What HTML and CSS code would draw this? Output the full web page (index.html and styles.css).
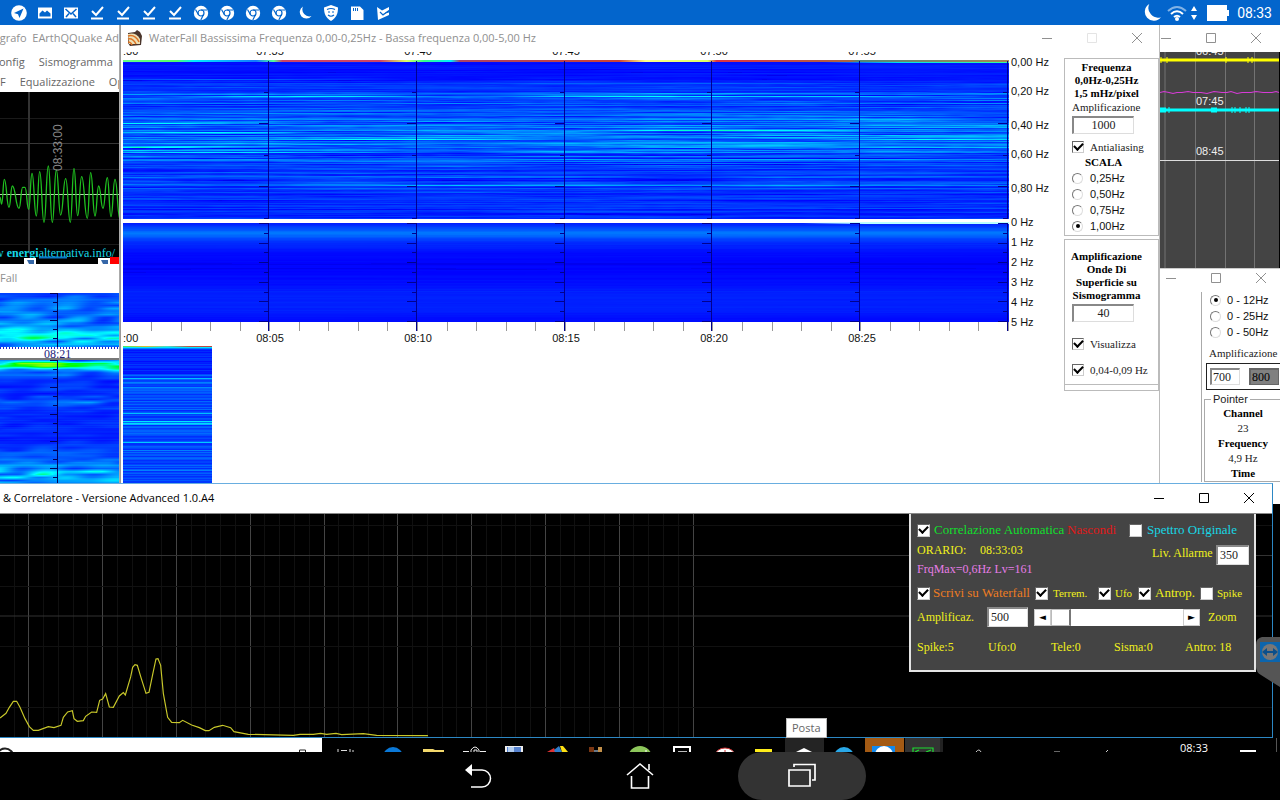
FILE: index.html
```html
<!DOCTYPE html>
<html lang="it">
<head>
<meta charset="utf-8">
<title>EArthQQuake</title>
<link rel="stylesheet" href="styles.css">
</head>
<body>
<svg class="defs" width="0" height="0" aria-hidden="true">
  <symbol id="check" viewBox="0 0 16 16"><path d="M3 6l4 4 7-8" fill="none" stroke="#fff" stroke-width="2"/><path d="M2 13.500h12" stroke="#fff" stroke-width="2"/></symbol>
  <symbol id="chrome" viewBox="0 0 16 16"><circle cx="8" cy="8" r="7.200" fill="#fff"/><circle cx="8" cy="8" r="3" fill="none" stroke="#0365cc" stroke-width="1.200"/><path d="M8 5h6M5.400 9.500L2.500 4.500M10.600 9.500L7.800 15" stroke="#0365cc" stroke-width="1.200"/></symbol>
  <symbol id="moon" viewBox="0 0 16 16"><path d="M6 1.500a6.500 6.500 0 1 0 8.500 9.500A7 7 0 0 1 6 1.500z" fill="#fff"/></symbol>
  <symbol id="min" viewBox="0 0 12 12"><path d="M1 6.500h10" stroke="currentColor"/></symbol>
  <symbol id="max" viewBox="0 0 12 12"><path d="M1.500 1.500h9v9h-9z" fill="none" stroke="currentColor"/></symbol>
  <symbol id="close" viewBox="0 0 12 12"><path d="M1 1l10 10M11 1L1 11" stroke="currentColor"/></symbol>
</svg>

<header class="status">
  <div class="status-icons">
    <svg viewBox="0 0 16 16"><circle cx="8" cy="8" r="7.800" fill="#fff"/><path d="M12.500 3.500L3 8l4 1.200L8.500 13z" fill="#0365cc"/></svg>
    <svg viewBox="0 0 16 16"><path d="M1 2.500h14v11H1z" fill="#fff"/><path d="M2.500 11.500V8.500l3-3 2.500 2 2-2 3.500 3v3z" fill="#0365cc"/></svg>
    <svg viewBox="0 0 16 16"><path d="M1 2.500h14v11H1z" fill="#fff"/><path d="M2.500 4l5.500 5 5.500-5M3 12l3-3.500M13 12l-3-3.500" fill="none" stroke="#0365cc" stroke-width="1.500"/></svg>
    <svg><use href="#check"/></svg><svg><use href="#check"/></svg><svg><use href="#check"/></svg><svg><use href="#check"/></svg>
    <svg><use href="#chrome"/></svg><svg><use href="#chrome"/></svg><svg><use href="#chrome"/></svg><svg><use href="#chrome"/></svg>
    <svg><use href="#moon"/></svg>
    <svg viewBox="0 0 16 16"><path d="M8 0l7 2.500c0 6-1.500 10-7 13.500C2.500 12.500 1 8.500 1 2.500z" fill="#fff"/><path d="M4 4.500q4-2 8 0M5 7h2M9 7h2M5 10q3 2.500 6 0" fill="none" stroke="#0365cc" stroke-width="1.200"/></svg>
    <svg viewBox="0 0 16 16"><path d="M2 1.500h9l3.500 3.500v10H2z" fill="#fff"/><path d="M4.500 3v3M6.500 3v3M8.500 3v3" stroke="#0365cc"/></svg>
    <svg viewBox="0 0 16 16"><path d="M2 2l5 3.500 7-3.500v3.500L8 9l6-1.500V10L3 15z" fill="#fff"/><path d="M5 7l3 3 6-4.500" fill="none" stroke="#0365cc" stroke-width="1.200"/></svg>
  </div>
  <div class="status-right">
    <svg class="big-moon"><use href="#moon"/></svg>
    <svg class="wifi" viewBox="0 0 20 16"><g fill="none" stroke="#fff" stroke-width="2"><path d="M1 6q9-8 18 0" opacity=".5"/><path d="M4 9q6-5.500 12 0M7 12q3-2.500 6 0"/></g><circle cx="10" cy="14" r="2" fill="#fff"/></svg>
    <svg class="updown" viewBox="0 0 6 14"><path d="M3 0l3 5H0zM3 14l3-5H0z" fill="#fff"/></svg>
    <svg class="battery" viewBox="0 0 22 16"><path d="M0 0h20v5h2v6h-2v5H0z" fill="#fff"/></svg>
    <time>08:33</time>
  </div>
</header>

<main class="desktop">
  <div class="workspace">
    <section class="window seismo">
      <div class="titlebar faded"><span>grafo&nbsp; EArthQQuake Ad</span></div>
      <nav class="menu menu-top"><a href="#">onfig</a><a href="#">Sismogramma</a></nav>
      <nav class="menu menu-sub"><a href="#">F</a><a href="#">Equalizzazione</a><a href="#">Op</a></nav>
      <svg class="trace" viewBox="0 0 120 172" preserveAspectRatio="xMinYMin slice">
        <rect width="120" height="172" fill="#000"/>
        <path d="M0 26.500h120M0 77.500h120M0 127.500h120M0 152.500h120" stroke="#1a1a1a"/>
        <path d="M0 51.500h120" stroke="#383838"/><path d="M29 0v160" stroke="#333" stroke-width="2"/>
        <path d="M0 102.500h120" stroke="#b8d8b0"/>
        <g transform="translate(0 -12) scale(.3333)"><path id="wave" fill="none" stroke="#1fc01f" stroke-width="4"/></g>
        <text class="trace-time" transform="translate(62 79) rotate(-90)">08:33:00</text>
        <text class="trace-link" x="-5" y="165">w <tspan font-weight="bold">energi</tspan>alternativa.info/</text>
        <path d="M39 165.500h28" stroke="#0878c8" stroke-width="2"/>
        <path d="M24 166h12v6H24zM98 166h12v6H98z" fill="#fff"/><path d="M27 168h7v4h-5zM101 168h7v4h-5z" fill="#3567a8"/><path d="M110 165h10v7h-10z" fill="red"/>
      </svg>
    </section>

    <section class="window fall">
      <div class="titlebar faded"><span>Fall</span></div>
      <canvas id="fall-a" width="120" height="54"></canvas>
      <div class="fall-axis"><span>08:21</span></div>
      <canvas id="fall-b" width="120" height="123"></canvas>
    </section>

    <section class="window waterfall">
      <div class="titlebar faded">
        <svg class="app-icon" viewBox="0 0 16 16"><path d="M1 3l7-1 2-2 3 2 2 4-1 9-11 1-2-3z" fill="#4a352b"/><path d="M1 4q8-2 12 5v5H2z" fill="#eee0b5"/><path d="M1 6q7-2 11 6M1 9q5-1 8 5M1 12q3 0 4 3" fill="none" stroke="#dd7425" stroke-width="1.500"/></svg>
        <span>WaterFall Bassissima Frequenza 0,00-0,25Hz - Bassa frequenza 0,00-5,00 Hz</span>
        <div class="controls"><button aria-label="Riduci"><svg><use href="#min"/></svg></button><button class="off" aria-label="Ingrandisci"><svg><use href="#max"/></svg></button><button aria-label="Chiudi"><svg><use href="#close"/></svg></button></div>
      </div>
      <div class="waterfall-body">
        <div class="charts">
          <div class="times times-cut"><span>:30</span><span>07:35</span><span>07:40</span><span>07:45</span><span>07:50</span><span>07:55</span></div>
          <canvas id="main-fall" width="886" height="271"></canvas>
          <div class="times"><span>:00</span><span>08:05</span><span>08:10</span><span>08:15</span><span>08:20</span><span>08:25</span></div>
          <canvas id="next-fall" width="89" height="137"></canvas>
        </div>
        <ul class="scale">
          <li>0,00 Hz</li><li>0,20 Hz</li><li>0,40 Hz</li><li>0,60 Hz</li><li>0,80 Hz</li>
          <li>0 Hz</li><li>1 Hz</li><li>2 Hz</li><li>3 Hz</li><li>4 Hz</li><li>5 Hz</li>
        </ul>
        <aside class="side">
          <div class="box box-freq">
            <p class="head">Frequenza<br>0,0Hz-0,25Hz<br>1,5 mHz/pixel</p>
            <label class="cap" for="amp1">Amplificazione</label>
            <input class="field" id="amp1" value="1000">
            <label class="opt"><input type="checkbox" checked>Antialiasing</label>
            <p class="scala">SCALA</p>
            <div class="radios">
              <label><input type="radio" name="scala">0,25Hz</label>
              <label><input type="radio" name="scala">0,50Hz</label>
              <label><input type="radio" name="scala">0,75Hz</label>
              <label><input type="radio" name="scala" checked>1,00Hz</label>
            </div>
          </div>
          <div class="box box-amp">
            <label class="head" for="amp2">Amplificazione<br>Onde Di<br>Superficie su<br>Sismogramma</label>
            <input class="field" id="amp2" value="40">
            <label class="opt"><input type="checkbox" checked>Visualizza</label>
            <label class="opt"><input type="checkbox" checked>0,04-0,09 Hz</label>
          </div>
          <div class="box box-end"></div>
        </aside>
      </div>
    </section>

    <section class="window drum">
      <div class="titlebar faded"><div class="controls"><button aria-label="Riduci"><svg><use href="#min"/></svg></button><button aria-label="Ingrandisci"><svg><use href="#max"/></svg></button><button aria-label="Chiudi"><svg><use href="#close"/></svg></button></div></div>
      <svg class="drum-plot" viewBox="0 0 120 216" preserveAspectRatio="xMinYMin slice">
        <rect width="119" height="216" fill="#444"/><path d="M119.500 0v216" stroke="#000"/>
        <path d="M5 0v216M35.500 0v216M65.500 0v216M94.500 0v216" stroke="#737373"/>
        <g class="drum-label"><text x="36" y="3">06:45</text><text x="36" y="53">07:45</text><text x="36" y="103">08:45</text></g>
        <path d="M0 8h119" stroke="#ff0" stroke-width="3"/><path d="M1 5v6M7 5v6M66 5v6M88 5v6M92 5v6" stroke="#ff0"/>
        <path d="M0 40.500l4-1 5 1 4 1 4-1 5 0 6-1 5 1 8 0 6 1 7-2 8 1 5 0 4-1 6 2 5-1 9 0 5-1 7 1 9 0 4-1 3 1" fill="none" stroke="#d63bd6" stroke-width="1.200"/>
        <path d="M0 58h119" stroke="#0ff" stroke-width="3"/><path d="M0 58h6M51 58h6" stroke="#0ff" stroke-width="5"/><path d="M9 55v6M72 55v6M75 55v6M80 55v6M86 55v6M89 55v6" stroke="#0ff"/>
        <path d="M0 108.500h119" stroke="#ddd"/>
      </svg>
    </section>

    <section class="window pointer">
      <div class="titlebar faded"><div class="controls"><button aria-label="Riduci"><svg><use href="#min"/></svg></button><button aria-label="Ingrandisci"><svg><use href="#max"/></svg></button><button aria-label="Chiudi"><svg><use href="#close"/></svg></button></div></div>
      <div class="pointer-body">
        <div class="radios">
          <label><input type="radio" name="banda" checked>0 - 12Hz</label>
          <label><input type="radio" name="banda">0 - 25Hz</label>
          <label><input type="radio" name="banda">0 - 50Hz</label>
        </div>
        <label class="cap" for="lo">Amplificazione</label>
        <div class="pair"><input class="field" id="lo" value="700"><input class="field gray" aria-label="Massimo" value="800"></div>
        <fieldset><legend>Pointer</legend>
          <dl><dt>Channel</dt><dd>23</dd><dt>Frequency</dt><dd>4,9 Hz</dd><dt>Time</dt></dl>
        </fieldset>
      </div>
    </section>

    <section class="window correlator">
      <div class="titlebar"><span>&amp; Correlatore - Versione Advanced 1.0.A4</span>
        <div class="controls"><button aria-label="Riduci"><svg><use href="#min"/></svg></button><button aria-label="Ingrandisci"><svg><use href="#max"/></svg></button><button aria-label="Chiudi"><svg><use href="#close"/></svg></button></div>
      </div>
      <div class="spectrum">
        <svg viewBox="0 514 1272 223" preserveAspectRatio="xMinYMin slice">
          <g id="grid"></g>
          <path d="M0 525.500h1272M0 586.500h1272M0 646.500h1272M0 707.500h1272" stroke="#111"/>
          <path d="M0 555.500h1272M0 616h1272" stroke="#333"/>
          <g transform="translate(0 480) scale(.3333)"><path d="M0 714L18 700 28 682 40 664 50 664 60 682 75 716 88 740 100 751 115 751 145 740 162 743 183 736 190 712 203 696 217 692 222 716 232 724 250 722 257 709 275 696 290 697 299 661 308 657 317 641 328 681 340 682 358 648 370 638 376 645 392 591 398 562 405 554 412 556 424 596 438 640 447 637 460 574 468 537 474 536 482 556 490 640 503 712 515 727 538 728 548 721 575 735 598 743 616 752 627 752 643 742 668 736 692 743 702 755 745 763 880 766 900 763 940 763 962 760 980 763 1008 760 1025 764 1090 761 1130 766 1284 767" fill="none" stroke="#c8c82a" stroke-width="3.500"/></g>
        </svg>
        <form class="panel">
          <div class="row r1"><input type="checkbox" id="auto" checked><label class="green" for="auto">Correlazione Automatica</label><a class="red" href="#">Nascondi</a><input type="checkbox" id="orig"><label class="cyan" for="orig">Spettro Originale</label></div>
          <div class="row r2"><div class="readout"><span>ORARIO:</span><time>08:33:03</time><span class="pink">FrqMax=0,6Hz Lv=161</span></div><label for="liv">Liv. Allarme</label><input class="field" id="liv" value="350"></div>
          <div class="row r3"><input type="checkbox" id="scr" checked><label class="orange" for="scr">Scrivi su Waterfall</label><input type="checkbox" id="ter" checked><label class="small" for="ter">Terrem.</label><input type="checkbox" id="ufo" checked><label class="small" for="ufo">Ufo</label><input type="checkbox" id="ant" checked><label for="ant">Antrop.</label><input type="checkbox" id="spi"><label class="small" for="spi">Spike</label></div>
          <div class="row r4"><label for="amp3">Amplificaz.</label><input class="field" id="amp3" value="500">
            <div class="scroll"><button type="button" aria-label="Meno">◄</button><input type="range" aria-label="Zoom" min="0" max="100" value="0"><button type="button" aria-label="Più">►</button></div><span>Zoom</span></div>
          <div class="row r5"><span>Spike:5</span><span>Ufo:0</span><span>Tele:0</span><span>Sisma:0</span><span>Antro: 18</span></div>
        </form>
      </div>
    </section>
    <div class="tooltip" role="tooltip">Posta</div>
    <svg class="viewer" viewBox="0 0 24 50"><path d="M6 0h18v50L5 38Q0 35 0 30V8Q0 1 6 0z" fill="#555"/><path d="M4 5h20v20H4z" fill="#0c65ad"/><circle cx="14" cy="15" r="8" fill="#777"/><path d="M6 15l5-4v3h6v-3l5 4-5 4v-3h-6v3z" fill="#0b4f8b"/></svg>
  </div>

  <div class="taskbar">
    <input class="search" type="search" aria-label="Cerca">
    <svg class="search-glyphs" viewBox="0 0 322 14" aria-hidden="true"><circle cx="5" cy="19" r="8.500" fill="none" stroke="#222" stroke-width="2"/><path d="M299.500 14v-2h6v2" fill="none" stroke="#222"/></svg>
    <svg class="apps" viewBox="322 0 858 14" preserveAspectRatio="xMinYMin slice">
      <path d="M338 14v-3M341 12.500h6M350 14v-3M353 14v-2" stroke="#ddd"/>
      <circle cx="393" cy="19" r="10" fill="#0a78d7"/>
      <path d="M423 11h10l2 1h9v2h-21z" fill="#f3d86c"/>
      <path d="M471 14v-2q4-6 8 0v2M474 14v-2h3v2M463 13.500h6M480 13.500h6" fill="none" stroke="#eee"/>
      <path d="M505 8h18v6h-18z" fill="#eee"/><path d="M507 9h14v5h-14z" fill="#5783cf"/><path d="M508 9h6v5h-6z" fill="#b2cdf0"/>
      <path d="M547 14l7-4 2 4z" fill="#d33"/><path d="M554 12l5-4 3 6h-7z" fill="#2e7ecb"/><path d="M560 8l3 0 5 6h-6z" fill="#fde014"/>
      <path d="M589 9h5v5h-5z" fill="#793613"/><path d="M594 12h4v2h-4z" fill="#678"/><path d="M598 9h4v5h-4z" fill="#c4914a"/>
      <circle cx="640" cy="20" r="12" fill="#8dc65b"/><path d="M646 12v2" stroke="#fff"/>
      <path d="M674 14V9h16v5" fill="none" stroke="#fff" stroke-width="2"/><path d="M678 13.500h9" stroke="#bbb"/>
      <ellipse cx="725" cy="18" rx="10" ry="8" fill="#fff" stroke="#c33"/><path d="M725 12v2" stroke="#c33"/>
      <path d="M755 11h17v3h-17z" fill="#ffed1a"/>
      <path d="M785 0h39v14h-39z" fill="#242424"/><path d="M796 14l8-4 8 4z" fill="#fff"/>
      <circle cx="844" cy="19" r="10" fill="#29a8e8"/>
      <path d="M865 0h39v14h-39z" fill="#a35a14"/><path d="M872 8h23v6h-23z" fill="#1289ec"/><circle cx="884" cy="17" r="9" fill="#fff"/>
      <path d="M905 0h35v14h-35z" fill="#333"/><path d="M940 0h3v14h-3z" fill="#222"/><path d="M913 14v-4h20v4M915 14l4-2M926 14l5-2" fill="none" stroke="#1ddd30" stroke-width="1.200"/>
      <path d="M976 14q3-4 5 0M1106 14l2-2" fill="none" stroke="#ccc"/><path d="M1054 13.500h6" stroke="#666"/>
    </svg>
    <time>08:33</time>
    <svg class="notify" viewBox="0 0 40 14"><path d="M0 12h16v2H0z" fill="#fff"/><path d="M36.500 0v14" stroke="#555"/></svg>
  </div>
</main>

<footer class="navbar">
  <button aria-label="Indietro"><svg viewBox="0 0 28 28"><path d="M7 8h11a8.500 8.500 0 0 1 0 17H7" fill="none" stroke="#fff" stroke-width="1.500"/><path d="M1 8l7-6v12z" fill="#fff"/></svg></button>
  <button aria-label="Home"><svg viewBox="0 0 28 28"><path d="M1 13L14 2l13 11M23 8V2M5.500 14v12h17V14" fill="none" stroke="#fff" stroke-width="1.600"/></svg></button>
  <button class="active" aria-label="Recenti"><svg viewBox="0 0 28 28"><path d="M1 8h21v16H1zM6 5V2.500h21V18h-3" fill="none" stroke="#fff" stroke-width="1.700"/></svg></button>
</footer>
<script src="app.js"></script>
</body>
</html>
```

FILE: styles.css
```css
* { box-sizing: border-box; }
body { margin: 0; min-height: 100vh; display: flex; flex-direction: column; background: #000; font-family: "Liberation Sans", sans-serif; font-size: 11px; line-height: 14px; color: #222; }
p, ul, dl, dd, fieldset { margin: 0; padding: 0; }
button { border: 0; padding: 0; background: none; color: inherit; }
a { color: inherit; text-decoration: none; }
canvas, svg { display: block; }
.defs { position: absolute; }

.status { height: 25px; padding: 0 8px 0 11px; display: flex; justify-content: space-between; align-items: center; background: #0365cc; color: #fff; }
.status-icons { display: flex; gap: 10px; }
.status-icons svg { width: 16px; height: 16px; }
.status-right { display: flex; align-items: center; gap: 4px; font: 14px/16px Roboto, sans-serif; }
.big-moon { width: 22px; height: 22px; }
.wifi { width: 20px; height: 16px; }
.updown { width: 6px; height: 14px; }
.battery { width: 22px; height: 16px; margin: 0 4px 0 6px; }

.desktop { flex: 1; display: flex; flex-direction: column; overflow: hidden; }
.workspace { flex: 1; min-height: 713px; position: relative; }
.window { position: absolute; background: #fff; overflow: hidden; }
.titlebar { height: 27px; padding-bottom: 2px; display: flex; align-items: center; justify-content: flex-end; font: 11px/16px "Open Sans", sans-serif; color: #000; white-space: nowrap; }
.titlebar > span { margin-right: auto; }
.faded { color: #909090; }
.controls { display: flex; flex: none; }
.controls button { width: 45px; display: grid; place-items: center; }
.controls svg { width: 12px; height: 12px; }
.controls .off { color: #e4e4e4; }

.seismo { left: 0; top: 0; width: 120px; height: 239px; border-right: 1px solid #aaa; }
.menu { display: flex; gap: 14px; height: 20px; font: 11px/20px "Open Sans", sans-serif; color: #666; white-space: nowrap; }
.menu-top { margin-left: -1px; }
.trace { width: 100%; height: 172px; }
.trace-time { font: 12px "Liberation Sans", sans-serif; fill: #888; }
.trace-link { font: 12px "Liberation Serif", serif; fill: #15d8e8; }

.fall { left: 0; top: 239px; width: 120px; height: 219px; border-right: 1px solid #aaa; }
.fall .titlebar { height: 29px; }
.fall canvas { width: 120px; }
.fall-axis { height: 13px; border-bottom: 2px solid #777; background: repeating-linear-gradient(90deg, #22c 0 1px, transparent 1px 3px) 0 0 / 100% 2px no-repeat; font: 12px/14px "Liberation Serif", serif; color: #22227a; padding-left: 44px; }

.waterfall { left: 120px; right: 120px; top: 0; height: 458px; border-left: 1px solid #999; border-right: 1px solid #bbb; }
.waterfall .titlebar { padding-left: 6px; gap: 6px; }
.app-icon { width: 16px; height: 16px; flex: none; }
.waterfall-body { display: flex; padding-left: 2px; }
.charts { flex: 1; min-width: 0; }
#main-fall { width: 100%; height: 271px; }
#next-fall { margin-top: 1px; }
.times { display: grid; grid-template-columns: 73fr repeat(5, 148fr) 73fr; line-height: 14px; text-align: center; color: #111; }
.times span:first-child { text-align: left; }
.times-cut { height: 8px; padding-bottom: 2px; align-content: end; overflow: hidden; }
.scale { list-style: none; width: 55px; padding: 3px 0 0 2px; color: #111; white-space: nowrap; }
.scale li { height: 20px; }
.scale li:nth-child(-n+5) { height: 34px; }
.scale li:nth-child(1), .scale li:nth-child(3) { height: 29px; }

.side { width: 95px; padding-top: 6px; font: 11px/13px "Liberation Serif", serif; }
.box { border: 1px solid #bbb; padding-left: 7px; }
.box-freq { height: 178px; padding-top: 2px; }
.box-amp { height: 146px; margin-top: 3px; padding-top: 10px; }
.box-end { height: 6px; border-top: 0; }
.head { display: block; margin-left: -7px; padding-right: 10px; font-weight: bold; text-align: center; color: #000; }
.cap { display: block; font: 11px/14px "Liberation Serif", serif; }
.field { width: 62px; height: 18px; border: 1px solid #ddd; border-top: 2px solid #888; border-left: 2px solid #888; padding: 0; background: #fff; font: 12px "Liberation Serif", serif; text-align: center; color: #222; }
.side .field { display: block; margin-top: 2px; }
.opt { display: flex; align-items: center; gap: 6px; height: 14px; margin-top: 6px; white-space: nowrap; }
.box-amp .opt { margin-top: 15px; }
.box-amp .opt + .opt { margin-top: 12px; }
.scala { padding-left: 13px; margin: 2px 0 1px; font-weight: bold; color: #000; }
.radios { font: 11px/16px "Liberation Sans", sans-serif; color: #111; }
.radios label { display: flex; align-items: center; height: 16px; gap: 6px; white-space: nowrap; }

input[type="checkbox"] { appearance: none; width: 12px; height: 12px; margin: 0; flex: none; background: #fff; border: 1px solid #ccc; border-top-color: #666; border-left-color: #666; display: grid; place-items: center; }
input[type="checkbox"]:checked::after { content: ""; width: 7px; height: 4px; border-left: 2px solid #000; border-bottom: 2px solid #000; transform: rotate(-45deg) translate(1px, -1px); }
input[type="radio"] { appearance: none; width: 11px; height: 11px; margin: 0 1px 0 0; flex: none; border-radius: 50%; border: 1px solid #ddd; border-top-color: #777; border-left-color: #777; background: #fff; display: grid; place-items: center; }
input[type="radio"]:checked::after { content: ""; width: 4px; height: 4px; border-radius: 50%; background: #000; }

.drum { right: 0; top: 0; width: 120px; height: 243px; }
.drum-plot { width: 100%; height: 216px; }
.drum-label { font: 11px "Liberation Sans", sans-serif; fill: #eee; }
.drum .controls { margin-right: 2px; }
.pointer { right: 0; top: 243px; width: 120px; height: 236px; border-top: 1px solid #ccc; }
.pointer .titlebar { height: 20px; }
.pointer .controls { margin-right: -3px; }
.pointer-body { margin: 3px 0 0 41px; border-left: 1px solid #aaa; padding-left: 2px; }
.pointer .radios { padding-left: 6px; }
.pointer .radios label { gap: 5px; }
.pointer .cap { margin: 6px 0 3px 5px; }
.pair { display: flex; gap: 9px; width: 80px; padding: 4px 3px; border: 1px solid #222; margin-left: 2px; }
.pair .field { width: 30px; height: 17px; text-align: left; padding-left: 1px; font-size: 12px; }
.pair .gray { background: #808080; border-color: #666; color: #000; }
fieldset { border: 1px solid #aaa; width: 90px; min-width: 0; margin-top: 2px; }
legend { margin-left: 6px; padding: 0 2px; }
dl { width: 76px; text-align: center; font: 11px/15px "Liberation Serif", serif; }
dt { font-weight: bold; color: #000; }

.correlator { left: 0; right: 7px; top: 458px; bottom: 0; display: flex; flex-direction: column; border: 1px solid #2c87c4; border-left: 0; border-top-color: #69aee0; }
.correlator .titlebar { height: 30px; padding-left: 3px; border-bottom: 1px solid #888; }
.correlator .controls { margin-right: 1px; }
.spectrum { flex: 1; min-height: 0; position: relative; background: #000; }
.spectrum > svg { width: 100%; height: 100%; }
.panel { position: absolute; right: 16px; top: 0; width: 347px; height: 158px; padding: 6px 0 0 6px; background: #444; border: 2px solid #e4e4e4; border-top: 0; color: #f1f11b; font: 13px/18px "Liberation Serif", serif; white-space: nowrap; }
.row { display: grid; align-items: center; }
.r1 { grid-template-columns: 17px 133px 62px 18px 1fr; height: 20px; }
.r2 { grid-template-columns: 235px 64px 32px; height: 40px; align-items: start; }
.r2 > label { padding-top: 4px; }
.r2 > .field { margin-top: 5px; }
.r2, .r4, .r5 { font-size: 12px; }
.readout { display: grid; grid-template-columns: 63px 1fr; row-gap: 1px; padding-top: 1px; }
.readout .pink { grid-column: 1 / 3; }
.r3 { grid-template-columns: 16px 102px 18px 45px 17px 23px 17px 45px 17px 1fr; height: 26px; }
.r4 { grid-template-columns: 70px 47px 174px 1fr; height: 22px; }
.r5 { grid-template-columns: 71px 63px 63px 71px 1fr; height: 38px; }
.panel .field { height: 20px; text-align: left; padding-left: 2px; font-size: 12px; }
.r2 .field { width: 33px; }
.r4 .field { width: 41px; }
.panel input[type="checkbox"] { width: 13px; height: 13px; }
.small { font-size: 11px; }
.green { color: #12df2d; } .red { color: #e01818; } .cyan { color: #17d7e5; } .pink { color: #e87de8; } .orange { color: #ec7c22; }
.scroll { display: grid; grid-template-columns: 17px 1fr 17px; width: 166px; height: 17px; background: #fff; }
.scroll button { background: #fff; border: 1px solid #ccc; font: 9px/12px "DejaVu Sans", sans-serif; color: #000; }
.scroll input { appearance: none; width: 100%; min-width: 0; height: 17px; margin: 0; background: #fff; }
.scroll input::-webkit-slider-thumb { appearance: none; width: 20px; height: 17px; background: #fff; border: 1px solid #bbb; border-right: 2px solid #777; }

.tooltip { position: absolute; left: 786px; bottom: 0; height: 20px; padding: 0 5px; border: 1px solid #bbb; background: #fff; font: 11px/18px "Open Sans", sans-serif; color: #666; }
.viewer { position: absolute; right: 0; top: 612px; width: 24px; height: 50px; }

.taskbar { height: 14px; display: flex; overflow: hidden; position: relative; background: #000; color: #fff; }
.search { width: 322px; height: 14px; border: 0; border-radius: 0; padding: 0 16px; background: #fff; flex: none; }
.search-glyphs { position: absolute; left: 0; top: 0; width: 322px; height: 14px; pointer-events: none; }
.apps { flex: 1; min-width: 0; height: 14px; }
.taskbar time { width: 60px; padding: 3px 0 0; font: 11px/14px "Open Sans", sans-serif; }
.notify { width: 40px; height: 14px; }

.navbar { height: 48px; display: flex; justify-content: center; gap: 34px; background: #000; }
.navbar button { width: 128px; border-radius: 24px; display: grid; place-items: center; }
.navbar svg { width: 28px; height: 28px; }
.navbar .active { background: #333; }
```

FILE: app.js
```js
// Deterministic random numbers, so the traces look the same on each load.
function rng(seed) {
  return function () {
    seed = (seed + 0x6D2B79F5) | 0;
    let t = Math.imul(seed ^ (seed >>> 15), 1 | seed);
    t = (t + Math.imul(t ^ (t >>> 7), 61 | t)) ^ t;
    return ((t ^ (t >>> 14)) >>> 0) / 4294967296;
  };
}

// Signal level to colour: blue, cyan, green, yellow, red.
function heat(v) {
  if (v < 0) return [0, 0, 240];
  if (v < 1) return [0, 255 * v, 255];
  if (v < 1.5) return [0, 255, 255 * (1.5 - v) * 2];
  if (v < 2) return [255 * (v - 1.5) * 2, 255, 0];
  return [255, Math.max(0, 255 * (3 - v)), 0];
}

function smooth(rand, n) {
  const a = Array.from({ length: n + 2 }, rand);
  return function (p) {
    const i = Math.floor(p), f = p - i, s = f * f * (3 - 2 * f);
    return a[i] * (1 - s) + a[i + 1] * s;
  };
}

function paint(ctx, x0, y0, w, h, level) {
  const img = ctx.createImageData(w, h);
  for (let y = 0; y < h; y++) {
    const row = level(y);
    for (let x = 0; x < w; x++) {
      const c = heat(row(x)), k = (y * w + x) * 4;
      img.data[k] = c[0]; img.data[k + 1] = c[1]; img.data[k + 2] = c[2]; img.data[k + 3] = 255;
    }
  }
  ctx.putImageData(img, x0, y0);
}

// Interpolates a level from a list of [row, level] stops.
function ramp(stops) {
  return y => {
    for (let i = 1; i < stops.length; i++) {
      const [a, va] = stops[i - 1], [b, vb] = stops[i];
      if (y <= b) return va + (vb - va) * (y - a) / (b - a);
    }
    return stops[stops.length - 1][1];
  };
}

const main = document.getElementById("main-fall").getContext("2d");
main.fillStyle = "#fff";
main.fillRect(0, 0, 886, 271);

const upper = ramp([[0, 0.08], [16, 0.08], [22, 0.22], [29, 0.16], [33, 0.38], [45, 0.28], [58, 0.38], [66, 0.44], [88, 0.46], [98, 0.32], [108, 0.25], [124, 0.28], [135, 0.18], [158, 0.19]]);
// Strong signals: row, centre, half length, level.
const lines = [
  [18, 90, 120, 0.25], [35, 190, 120, 0.6], [36, 150, 120, 0.3], [35, 480, 110, 0.6], [34, 480, 90, 0.3], [35, 660, 150, 0.55],
  [32, 600, 260, 0.2], [62, 30, 90, 0.45], [61, 40, 110, 0.25], [71, 90, 100, 0.55], [78, 300, 130, 0.6], [77, 380, 120, 0.3],
  [86, 25, 80, 0.65], [85, 40, 70, 0.3], [91, 100, 130, 0.3], [74, 360, 110, 0.3], [75, 450, 90, 0.3], [79, 510, 80, 0.4],
  [80, 530, 80, 0.3], [84, 540, 100, 0.25], [69, 640, 130, 0.35], [70, 760, 120, 0.3], [75, 810, 90, 0.5], [77, 720, 130, 0.35],
  [78, 800, 80, 0.35], [81, 650, 110, 0.4], [88, 770, 80, 0.3], [98, 640, 220, 0.25], [97, 240, 90, 0.2], [124, 380, 260, 0.25],
  [124, 760, 120, 0.2], [58, 680, 120, 0.2], [55, 720, 100, 0.2]
];
const r1 = rng(17);
paint(main, 0, 1, 886, 158, y => {
  const base = upper(y), r = 0.45 + r1() * 0.9;
  const n = smooth(r1, 10), m = smooth(r1, 60);
  const here = lines.filter(l => l[0] === y);
  return x => {
    let v = base * r + base * 1.1 * (n(x / 110) - 0.5) + base * 0.3 * (m(x / 16) - 0.5);
    for (const l of here) v += l[3] * Math.exp(-(((x - l[1]) / l[2]) ** 2));
    return v;
  };
});

const lower = ramp([[0, 0.12], [6, 0.32], [9, 0.46], [12, 0.42], [15, 0.28], [20, 0.16], [28, 0.06], [36, 0.01], [46, 0.01], [50, 0.03], [62, 0.05], [68, 0.13], [88, 0.12], [94, 0.05], [98, 0.05]]);
const r2 = rng(3);
paint(main, 0, 163, 886, 99, y => {
  const j = (r2() - 0.5) * 0.035, n = smooth(r2, 6);
  return x => lower(y) + j + 0.03 * (n(x / 180) - 0.5);
});

const edge = main.createLinearGradient(0, 0, 886, 0);
[[0, "#6f8"], [0.06, "#5f6"], [0.08, "#0ef"], [0.15, "#17f"], [0.17, "#5f9"], [0.18, "#c46"], [0.29, "#c46"], [0.32, "#df6"], [0.34, "#3f8"], [0.37, "#0ef"], [0.38, "#a46"], [0.56, "#c43"], [0.59, "#ff8"], [0.66, "#df6"], [0.67, "#d34"], [0.82, "#a64"], [0.83, "#587"], [1, "#a85"]].forEach(s => edge.addColorStop(s[0], s[1]));
main.fillStyle = edge;
main.fillRect(0, 0, 886, 2);
const glow = main.createLinearGradient(700, 0, 886, 0);
glow.addColorStop(0, "rgba(0,220,255,0)");
glow.addColorStop(0.4, "#0de");
glow.addColorStop(1, "#3f9");
main.fillStyle = glow;
main.fillRect(700, 2, 186, 1);
const foam = main.createLinearGradient(680, 0, 886, 0);
foam.addColorStop(0, "rgba(180,255,255,0)");
foam.addColorStop(0.3, "#bff");
main.fillStyle = foam;
main.fillRect(680, 162, 206, 2);

for (let i = 0; i < 30; i++) {
  main.fillStyle = "#999";
  main.fillRect(Math.round(28 + i * 29.55), 262, 1, 9);
}
for (let i = 0; i < 6; i++) {
  const x = Math.round(145 + i * 147.8);
  main.fillStyle = "#000090";
  main.fillRect(x, 1, 1, 158);
  main.fillRect(x, 163, 1, 108);
  for (let k = 1; k < 6; k++) {
    const len = k % 2 ? 4 : 9;
    main.fillRect(x - len, Math.round(k * 31.5), len, 1);
  }
  for (let k = 0; k < 11; k++) {
    const len = k % 2 ? 4 : 9;
    main.fillRect(x - len, Math.round(163 + k * 9.8), len, 1);
  }
}

const next = document.getElementById("next-fall").getContext("2d");
const hot = { 1: 0.9, 2: 0.5, 32: 0.75, 36: 0.5, 41: 0.55, 67: 0.75, 75: 0.9, 77: 0.85, 78: 0.7, 96: 0.8, 104: 0.5, 124: 0.5 };
const rnd = rng(5);
paint(next, 0, 0, 89, 137, y => {
  const v = hot[y] || (y < 28 ? 0.04 + rnd() * 0.2 : 0.15 + rnd() * 0.28);
  return () => v;
});
const cap = next.createLinearGradient(0, 0, 89, 0);
["#4e6", "#db3", "#4dc", "#b54", "#b44"].forEach((c, i) => cap.addColorStop(i / 4, c));
next.fillStyle = cap;
next.fillRect(0, 0, 89, 1);

// Cloudy fast waterfall: noise stretched along the time axis.
function cloud(id, seed, w, h, profile) {
  const ctx = document.getElementById(id).getContext("2d");
  const rand = rng(seed);
  const rows = Array.from({ length: Math.ceil(h / 3) + 2 }, () => smooth(rand, 10));
  paint(ctx, 0, 0, w, h, y => {
    const i = Math.floor(y / 3), f = (y % 3) / 3, jit = (rand() - 0.5) * 0.08;
    return x => {
      const p = (x + y) / 26;
      const n = rows[i](p) * (1 - f) + rows[i + 1](p) * f;
      return profile(y) * (0.35 + 1.2 * n) + jit;
    };
  });
  ctx.fillStyle = "#00005a";
  ctx.fillRect(57, 0, 1, h);
  for (let k = 0; k * 9 < h; k++) {
    const len = k % 3 ? 4 : 7;
    ctx.fillRect(57 - len, k * 9, len, 1);
  }
}
cloud("fall-a", 21, 120, 54, ramp([[0, 0.3], [12, 0.45], [30, 0.55], [44, 0.95], [53, 0.5]]));
cloud("fall-b", 33, 120, 123, ramp([[0, 0.6], [3, 1.3], [6, 1.3], [9, 0.9], [13, 0.4], [18, 0.18], [34, 0.18], [42, 0.4], [50, 0.18], [74, 0.15], [90, 0.25], [104, 0.4], [112, 0.8], [122, 0.7]]));

// Seismogram: rounded swings through alternating peaks.
const peaks = [[0, 352], [5, 372], [13, 298], [27, 382], [37, 318], [57, 385], [68, 322], [75, 322], [86, 388], [96, 280], [109, 408], [119, 275], [132, 427], [145, 258], [157, 427], [169, 270], [182, 405], [197, 296], [211, 427], [222, 265], [233, 407], [245, 290], [262, 415], [272, 278], [285, 408], [296, 318], [309, 385], [322, 293], [333, 410], [345, 298], [360, 418]];
let wave = `M${peaks[0]}`;
for (let i = 1; i < peaks.length; i++) {
  const [a, ya] = peaks[i - 1], [b, yb] = peaks[i], mid = (a + b) / 2;
  wave += `C${mid} ${ya} ${mid} ${yb} ${b} ${yb}`;
}
document.getElementById("wave").setAttribute("d", wave);

// Spectrum grid: five minor divisions between major ones.
const grid = document.getElementById("grid");
let minor = "", major = "";
for (let i = 0; i < 47; i++) {
  const x = Math.floor(28.8 + (i - 1) * 14.76);
  if ((i - 1) % 5 === 0) major += `M${x}.5 514v223`;
  else minor += `M${x}.5 514v223`;
}
grid.innerHTML = `<path d="${minor}" stroke="#101010"/><path d="${major}" stroke="#444"/>`;
```
